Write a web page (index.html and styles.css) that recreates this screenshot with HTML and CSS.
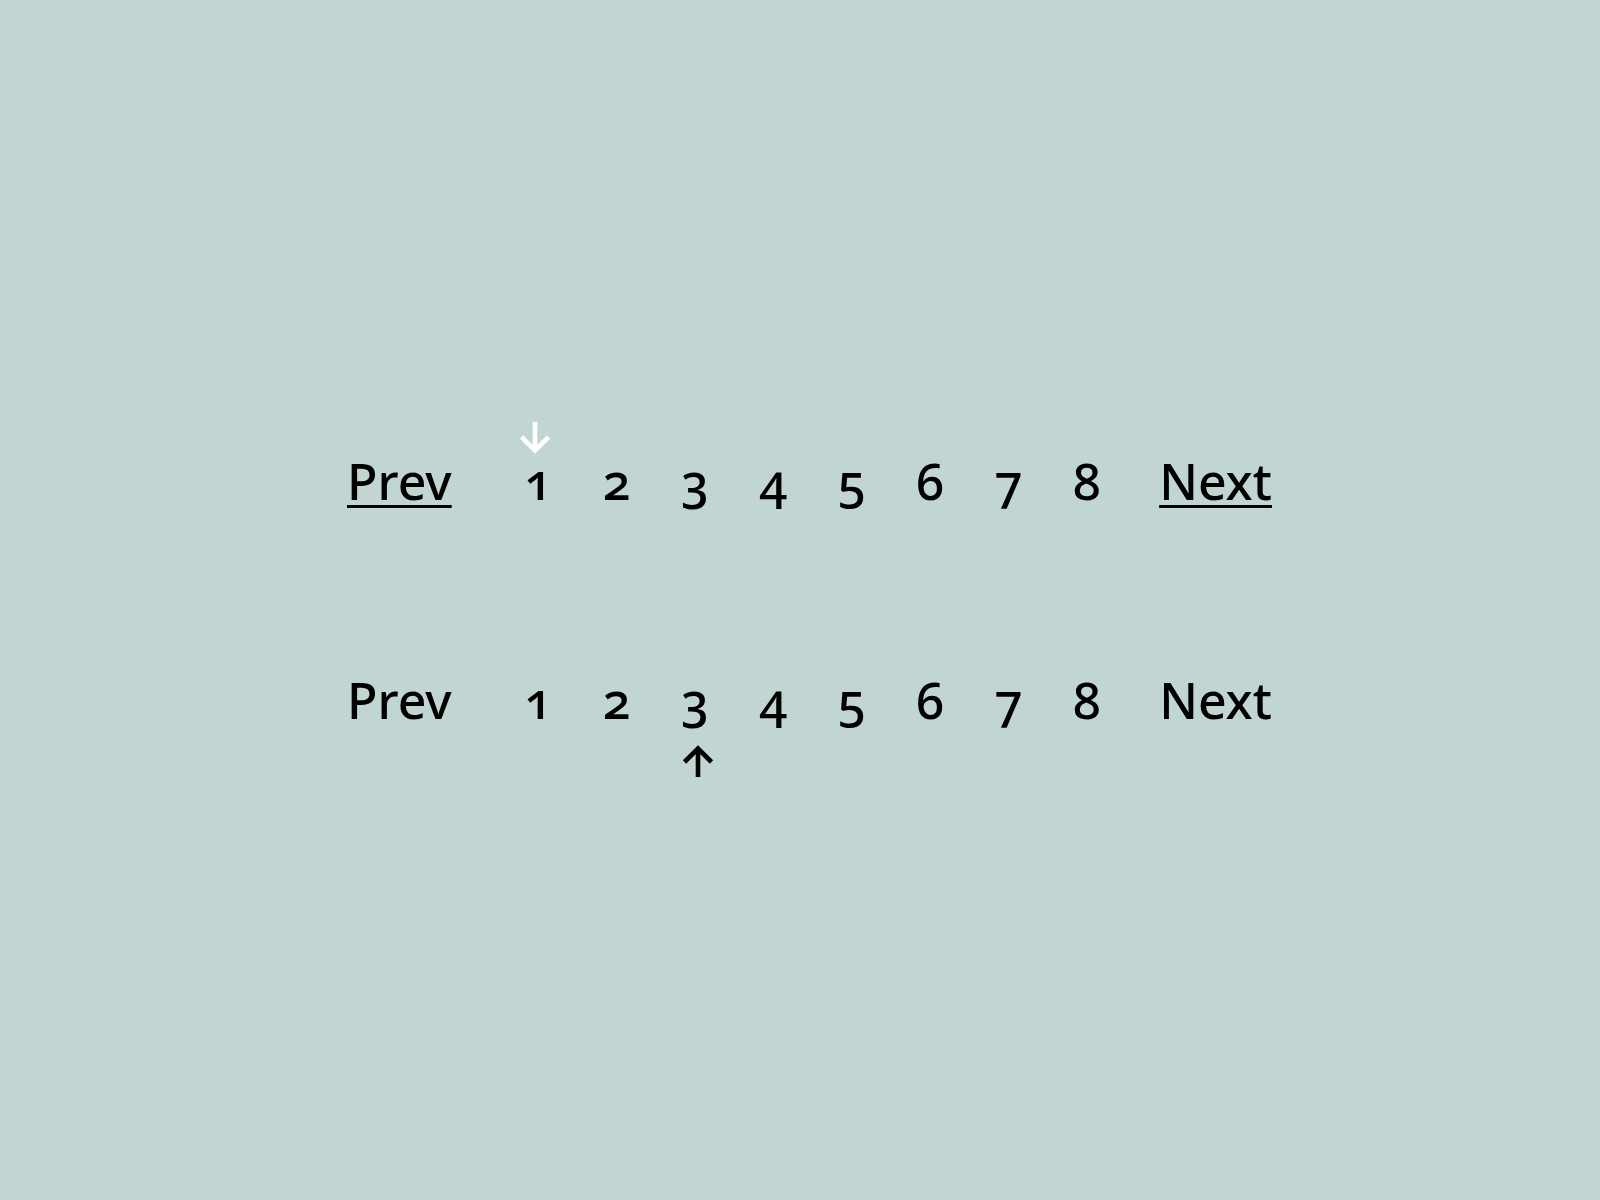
FILE: index.html
```html
<!DOCTYPE html>
<html lang="en">
<head>
<meta charset="utf-8">
<title>Pagination</title>
<link rel="stylesheet" href="styles.css">
</head>
<body>
<main class="stage">
  <nav class="pager pager--linked" aria-label="Pagination">
    <a class="pager__edge pager__edge--prev" href="#">Prev</a>
    <span class="pager__num pager__num--current">1
      <svg class="pager__mark pager__mark--above" viewBox="0 0 32 32" aria-hidden="true">
        <path d="M16 0V28.5M2.5 15L16 28.5L29.5 15"/>
      </svg>
    </span>
    <a class="pager__num" href="#">2</a>
    <a class="pager__num" href="#">3</a>
    <a class="pager__num" href="#">4</a>
    <a class="pager__num" href="#">5</a>
    <a class="pager__num" href="#">6</a>
    <a class="pager__num" href="#">7</a>
    <a class="pager__num" href="#">8</a>
    <a class="pager__edge pager__edge--next" href="#">Next</a>
  </nav>

  <nav class="pager pager--plain" aria-label="Pagination">
    <span class="pager__edge pager__edge--prev">Prev</span>
    <span class="pager__num">1</span>
    <span class="pager__num">2</span>
    <span class="pager__num pager__num--current">3
      <svg class="pager__mark pager__mark--below" viewBox="0 0 32 32" aria-hidden="true">
        <path d="M16 32V3.5M2.5 17L16 3.5L29.5 17"/>
      </svg>
    </span>
    <span class="pager__num">4</span>
    <span class="pager__num">5</span>
    <span class="pager__num">6</span>
    <span class="pager__num">7</span>
    <span class="pager__num">8</span>
    <span class="pager__edge pager__edge--next">Next</span>
  </nav>
</main>
</body>
</html>
```

FILE: styles.css
```css
html, body {
  margin: 0;
  height: 100%;
}

body {
  background: #c1d5d3;
  color: #000;
  font-family: "Noto Sans", "Open Sans", sans-serif;
  font-weight: 500;
  font-variant-numeric: oldstyle-nums;
}

.stage {
  display: flex;
  flex-direction: column;
  gap: 159px;
  padding: 451px 0 0 347px;
}

.pager {
  display: flex;
  align-items: baseline;
  font-size: 50px;
  line-height: 60px;
}

.pager a {
  color: inherit;
  text-decoration: none;
}

.pager__edge {
  display: block;
}

.pager__edge--prev {
  width: 152px;
}

.pager__edge--next {
  padding-left: 33px;
}

.pager--linked .pager__edge,
.pager--linked a.pager__edge {
  text-decoration: underline;
  text-decoration-thickness: 3px;
  text-underline-offset: 5px;
}

.pager__num {
  position: relative;
  width: 78.4px;
  text-align: center;
}

.pager__mark {
  position: absolute;
  left: 50%;
  width: 32px;
  height: 32px;
  margin-left: -16px;
  fill: none;
  stroke-width: 4.6;
}

.pager__mark--above {
  top: -29px;
  margin-left: -19px;
  stroke: #fff;
}

.pager__mark--below {
  top: 75px;
  margin-left: -13px;
  stroke: #000;
}
```
